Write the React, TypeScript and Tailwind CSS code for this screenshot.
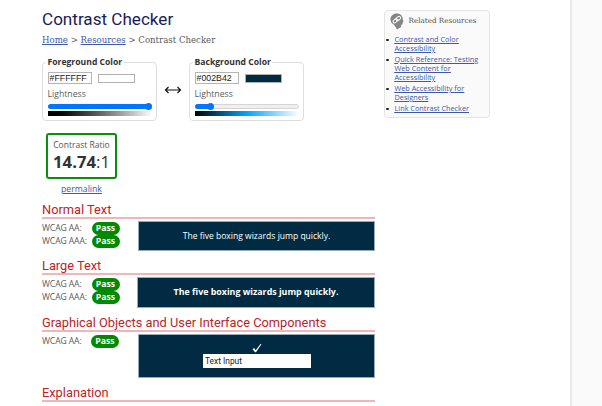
import type { ReactNode } from 'react';

const SANS = "font-['Open_Sans','Noto_Sans',sans-serif]";
const HEAD = "font-['Roboto',sans-serif]";
const SLAB = "font-['DejaVu_Serif',serif]";
const LINK = 'text-[#4058a8] underline decoration-1 underline-offset-1';

function ColorField({
  legend,
  value,
  swatch,
  level,
  gradient,
}: {
  legend: string;
  value: string;
  swatch: string;
  level: number;
  gradient: string;
}) {
  return (
    <fieldset className="flex h-[65px] w-[115px] flex-col">
      <div className="-mb-[7px] ml-[4px] h-[13px] self-start z-10 bg-white px-[1.5px] text-[8.6px] font-bold leading-[13px] text-[#333] whitespace-nowrap">
        {legend}
      </div>
      <div className="h-[59px] rounded-[4px] border border-[#dedede] px-[4.5px] pt-[9px]">
        <div className="flex h-[12px] items-center gap-[6px]">
          <div className="h-[12px] w-[44px] border border-[#b5b5b5] pl-[1px] font-['Liberation_Sans',sans-serif] text-[8.8px] leading-[11px] text-[#222]">
            {value}
          </div>
          <div className={`h-[9px] w-[37px] border border-[#b0b0b0] ${swatch}`} />
        </div>
        <div className="mt-[3px] h-[14px] text-[8.7px] leading-[15px] text-[#5c5c5c]">Lightness</div>
        <div className="mt-[2px] flex h-[7px] w-[104px] items-center">
          <div className="h-[5px] rounded-l-full bg-[#0075ff]" style={{ width: level }} />
          <div className="z-10 -mx-[3.5px] size-[7px] shrink-0 rounded-full bg-[#0075ff]" />
          <div className="h-[5px] flex-1 rounded-r-full border border-[#d5d5d5] bg-[#efefef]" />
        </div>
        <div className={`mt-px h-[5px] w-[104px] ${gradient}`} />
      </div>
    </fieldset>
  );
}

function Heading({ children }: { children: ReactNode }) {
  return (
    <h2
      className={`h-[16px] border-b-2 border-[#f0b4b9] text-[12.8px] leading-[13px] text-[#bd2328] whitespace-nowrap ${HEAD}`}
    >
      {children}
    </h2>
  );
}

function Result({ level, width = 'w-[49.5px]' }: { level: string; width?: string }) {
  return (
    <div className="flex h-[13.5px] items-center">
      <span className={`text-[8.6px] leading-[13px] tracking-[-0.1px] text-[#5a5a5a] whitespace-nowrap ${width}`}>{level}:</span>
      <span className="h-[13px] w-[28px] rounded-full bg-[#008a00] text-center text-[8.7px] font-bold leading-[13px] text-white">
        Pass
      </span>
    </div>
  );
}

function HeadLinkIcon() {
  return (
    <svg viewBox="0 0 14 17" className="mt-px h-[17px] w-[14px]">
      <path
        d="M7 .5C3 .5.5 3 .5 6.5c0 2.6 1.300 4 3.200 5.100.7.900 2.100 2.700 3.300 4.900l4.200-2.500-.1-2.200c1.500-.2 1.600-1 1.500-2.400l.9-.5-.7-2.500C12.700 2.700 10.500.5 7 .5Z"
        fill="#858585"
      />
      <g fill="none" stroke="#fff" strokeWidth="1" transform="rotate(-38 7 6.500)">
        <rect x="2.300" y="5" width="5" height="3" rx="1.500" />
        <rect x="6.200" y="5" width="5" height="3" rx="1.500" />
      </g>
    </svg>
  );
}

function Resource({ lines }: { lines: string[] }) {
  return (
    <li className="mb-[1.5px] flex">
      <span className="mt-[4px] mr-[6px] size-[2.5px] shrink-0 rounded-full bg-[#222]" />
      <a className={`text-[7.3px] leading-[9.2px] whitespace-nowrap ${LINK}`}>
        {lines.map((line) => (
          <span key={line} className="block underline">{line}</span>
        ))}
      </a>
    </li>
  );
}

export default function App() {
  return (
    <div className={`flex h-[406px] w-[602px] overflow-hidden bg-white ${SANS}`}>
      <main className="ml-[42px] w-[333px] shrink-0">
        <h1 className={`h-[32px] pt-[8px] text-[17.1px] leading-[22px] text-[#1a1a5e] whitespace-nowrap ${HEAD}`}>
          Contrast Checker
        </h1>
        <nav className={`h-[24px] pt-[1px] text-[8.6px] leading-[14px] text-[#5a5a5a] whitespace-nowrap ${SLAB}`}>
          <a className={LINK}>Home</a> &gt; <a className={LINK}>Resources</a> &gt; Contrast Checker
        </nav>
        <div className="flex h-[77px]">
          <ColorField
            legend="Foreground Color"
            value="#FFFFFF"
            swatch="bg-white"
            level={101}
            gradient="bg-linear-to-r from-black to-white"
          />
          <svg viewBox="0 0 32 12" className="mt-[28px] h-[12px] w-[32px] shrink-0" fill="none" stroke="#111" strokeWidth="1.2">
            <path d="M8.500 6h15M11.500 3l-3 3 3 3M20.500 3l3 3-3 3" />
          </svg>
          <ColorField
            legend="Background Color"
            value="#002B42"
            swatch="bg-[#002b42]"
            level={16}
            gradient="bg-linear-to-r/srgb from-black via-[#00a6ff] to-white"
          />
        </div>
        <div className="ml-[4px] h-[70px] w-[71px]">
          <div className="h-[46px] rounded-[3px] border-2 border-[#0a8f0a] pt-[3px] text-center text-[#333]">
            <div className="text-[8.5px] leading-[13px] text-[#555] whitespace-nowrap">Contrast Ratio</div>
            <div className="text-[16.7px] leading-[21px] whitespace-nowrap">
              <b>14.74</b>:1
            </div>
          </div>
          <div className="pt-[4px] text-center text-[8.7px] leading-[13px]">
            <a className={LINK}>permalink</a>
          </div>
        </div>

        <Heading>Normal Text</Heading>
        <section className="flex h-[40px] justify-between pt-[1px]">
          <div className="pt-[1.5px]">
            <Result level="WCAG AA" />
            <Result level="WCAG AAA" />
          </div>
          <div className="mt-px flex h-[30px] w-[237px] items-center justify-center border border-[#9aabb8] bg-[#002b42] text-[8.55px] text-white whitespace-nowrap">
            The five boxing wizards jump quickly.
          </div>
        </section>

        <Heading>Large Text</Heading>
        <section className="flex h-[41px] justify-between pt-[1px]">
          <div className="pt-[1.5px]">
            <Result level="WCAG AA" />
            <Result level="WCAG AAA" />
          </div>
          <div className="mt-px flex h-[31px] w-[238px] items-center justify-center border border-[#9aabb8] bg-[#002b42] text-[8.85px] font-bold text-white whitespace-nowrap">
            The five boxing wizards jump quickly.
          </div>
        </section>

        <Heading>Graphical Objects and User Interface Components</Heading>
        <section className="flex h-[54px] justify-between pt-[1px]">
          <div className="pt-[1.5px]">
            <Result level="WCAG AA" width="w-[49px]" />
          </div>
          <div className="mt-px flex h-[44px] w-[237px] flex-col items-center border border-[#9aabb8] bg-[#002b42] pt-[8px]">
            <svg viewBox="0 0 10 10" className="h-[10px] w-[10px]">
              <path d="M.5 6.200 2.200 5l1.500 2.200L8.700.8l.7.400L4 9.200h-.900Z" fill="#fff" />
            </svg>
            <div className="mt-px h-[14px] w-[108px] bg-white pl-[2.5px] font-['Roboto',sans-serif] text-[8.4px] leading-[14px] text-[#222]">
              Text Input
            </div>
          </div>
        </section>

        <Heading>Explanation</Heading>
      </main>

      <aside className="mt-[10px] ml-[9px] h-[108px] w-[106px] shrink-0 rounded-[4px] border-[1.5px] border-[#e4e4e4] bg-[#fafafa] pt-[1px]">
        <div className="flex h-[22.8px] gap-[5px] pl-[4.5px]">
          <HeadLinkIcon />
          <h3 className={`pt-[1px] text-[7.2px] leading-[15px] text-[#505050] whitespace-nowrap ${SLAB}`}>Related Resources</h3>
        </div>
        <ul className="pl-[1px]">
          <Resource lines={['Contrast and Color', 'Accessibility']} />
          <Resource lines={['Quick Reference: Testing', 'Web Content for', 'Accessibility']} />
          <Resource lines={['Web Accessibility for', 'Designers']} />
          <Resource lines={['Link Contrast Checker']} />
        </ul>
      </aside>

      <div className="ml-auto h-full w-[32px] border-l-2 border-[#e9e9e9] bg-[#fafafa]" />
    </div>
  );
}
